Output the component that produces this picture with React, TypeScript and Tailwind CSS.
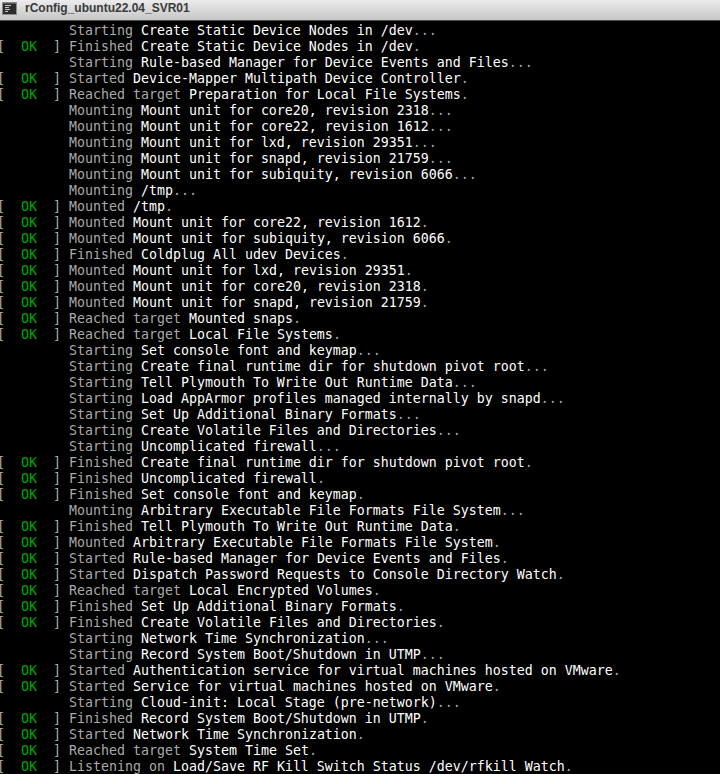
import React from "react";

type Line = [boolean, string, string, string];

const lines: Line[] = [
  [false, "Starting", "Create Static Device Nodes in /dev", "..."],
  [true, "Finished", "Create Static Device Nodes in /dev", "."],
  [false, "Starting", "Rule-based Manager for Device Events and Files", "..."],
  [true, "Started", "Device-Mapper Multipath Device Controller", "."],
  [true, "Reached target", "Preparation for Local File Systems", "."],
  [false, "Mounting", "Mount unit for core20, revision 2318", "..."],
  [false, "Mounting", "Mount unit for core22, revision 1612", "..."],
  [false, "Mounting", "Mount unit for lxd, revision 29351", "..."],
  [false, "Mounting", "Mount unit for snapd, revision 21759", "..."],
  [false, "Mounting", "Mount unit for subiquity, revision 6066", "..."],
  [false, "Mounting", "/tmp", "..."],
  [true, "Mounted", "/tmp", "."],
  [true, "Mounted", "Mount unit for core22, revision 1612", "."],
  [true, "Mounted", "Mount unit for subiquity, revision 6066", "."],
  [true, "Finished", "Coldplug All udev Devices", "."],
  [true, "Mounted", "Mount unit for lxd, revision 29351", "."],
  [true, "Mounted", "Mount unit for core20, revision 2318", "."],
  [true, "Mounted", "Mount unit for snapd, revision 21759", "."],
  [true, "Reached target", "Mounted snaps", "."],
  [true, "Reached target", "Local File Systems", "."],
  [false, "Starting", "Set console font and keymap", "..."],
  [false, "Starting", "Create final runtime dir for shutdown pivot root", "..."],
  [false, "Starting", "Tell Plymouth To Write Out Runtime Data", "..."],
  [false, "Starting", "Load AppArmor profiles managed internally by snapd", "..."],
  [false, "Starting", "Set Up Additional Binary Formats", "..."],
  [false, "Starting", "Create Volatile Files and Directories", "..."],
  [false, "Starting", "Uncomplicated firewall", "..."],
  [true, "Finished", "Create final runtime dir for shutdown pivot root", "."],
  [true, "Finished", "Uncomplicated firewall", "."],
  [true, "Finished", "Set console font and keymap", "."],
  [false, "Mounting", "Arbitrary Executable File Formats File System", "..."],
  [true, "Finished", "Tell Plymouth To Write Out Runtime Data", "."],
  [true, "Mounted", "Arbitrary Executable File Formats File System", "."],
  [true, "Started", "Rule-based Manager for Device Events and Files", "."],
  [true, "Started", "Dispatch Password Requests to Console Directory Watch", "."],
  [true, "Reached target", "Local Encrypted Volumes", "."],
  [true, "Finished", "Set Up Additional Binary Formats", "."],
  [true, "Finished", "Create Volatile Files and Directories", "."],
  [false, "Starting", "Network Time Synchronization", "..."],
  [false, "Starting", "Record System Boot/Shutdown in UTMP", "..."],
  [true, "Started", "Authentication service for virtual machines hosted on VMware", "."],
  [true, "Started", "Service for virtual machines hosted on VMware", "."],
  [false, "Starting", "Cloud-init: Local Stage (pre-network)", "..."],
  [true, "Finished", "Record System Boot/Shutdown in UTMP", "."],
  [true, "Started", "Network Time Synchronization", "."],
  [true, "Reached target", "System Time Set", "."],
  [true, "Listening on", "Load/Save RF Kill Switch Status /dev/rfkill Watch", "."],
];

function TermIcon() {
  return (
    <svg width="15" height="13" viewBox="0 0 15 13" className="block">
      <rect x="0.5" y="0.5" width="14" height="12" fill="#2c2c2c" stroke="#8a8a8a" />
      <rect x="1" y="1" width="13" height="1" fill="#5a5a5a" />
      <rect x="3" y="3" width="6" height="1" fill="#c8c8c8" />
      <rect x="3" y="5" width="4" height="1" fill="#c8c8c8" />
      <rect x="3" y="7" width="5" height="1" fill="#c8c8c8" />
      <rect x="3" y="9" width="3" height="1" fill="#c8c8c8" />
    </svg>
  );
}

export default function App() {
  return (
    <div className="w-[720px] h-[774px] overflow-hidden bg-black flex flex-col">
      <div className="h-[20px] shrink-0 flex items-start bg-gradient-to-b from-[#ececee] to-[#c6c6c6]">
        <div className="pl-[2px] pt-[2px]">
          <TermIcon />
        </div>
        <div
          className="ml-[8px] leading-[16px] text-[12px] font-bold text-[#3a3a3a]"
          style={{ fontFamily: '"Liberation Sans", Arial, sans-serif' }}
        >
          rConfig_ubuntu22.04_SVR01
        </div>
      </div>
      <div className="h-px shrink-0 bg-[#4a4a4a]" />
      <div
        className="pt-[2px] -ml-[3px] text-[13.29px] leading-[16px] text-[#aaaaaa]"
        style={{ fontFamily: '"DejaVu Sans Mono", monospace' }}
      >
        {lines.map(([ok, verb, desc, tail], i) => (
          <div key={i} className="h-4 whitespace-pre">
            {ok ? (
              <>
                <span>[</span>
                <span className="text-[#00aa00]">{"  OK  "}</span>
                <span>{"] "}</span>
              </>
            ) : (
              <span>{"         "}</span>
            )}
            <span>{verb} </span>
            <span className="text-white">{desc}</span>
            <span>{tail}</span>
          </div>
        ))}
      </div>
    </div>
  );
}
